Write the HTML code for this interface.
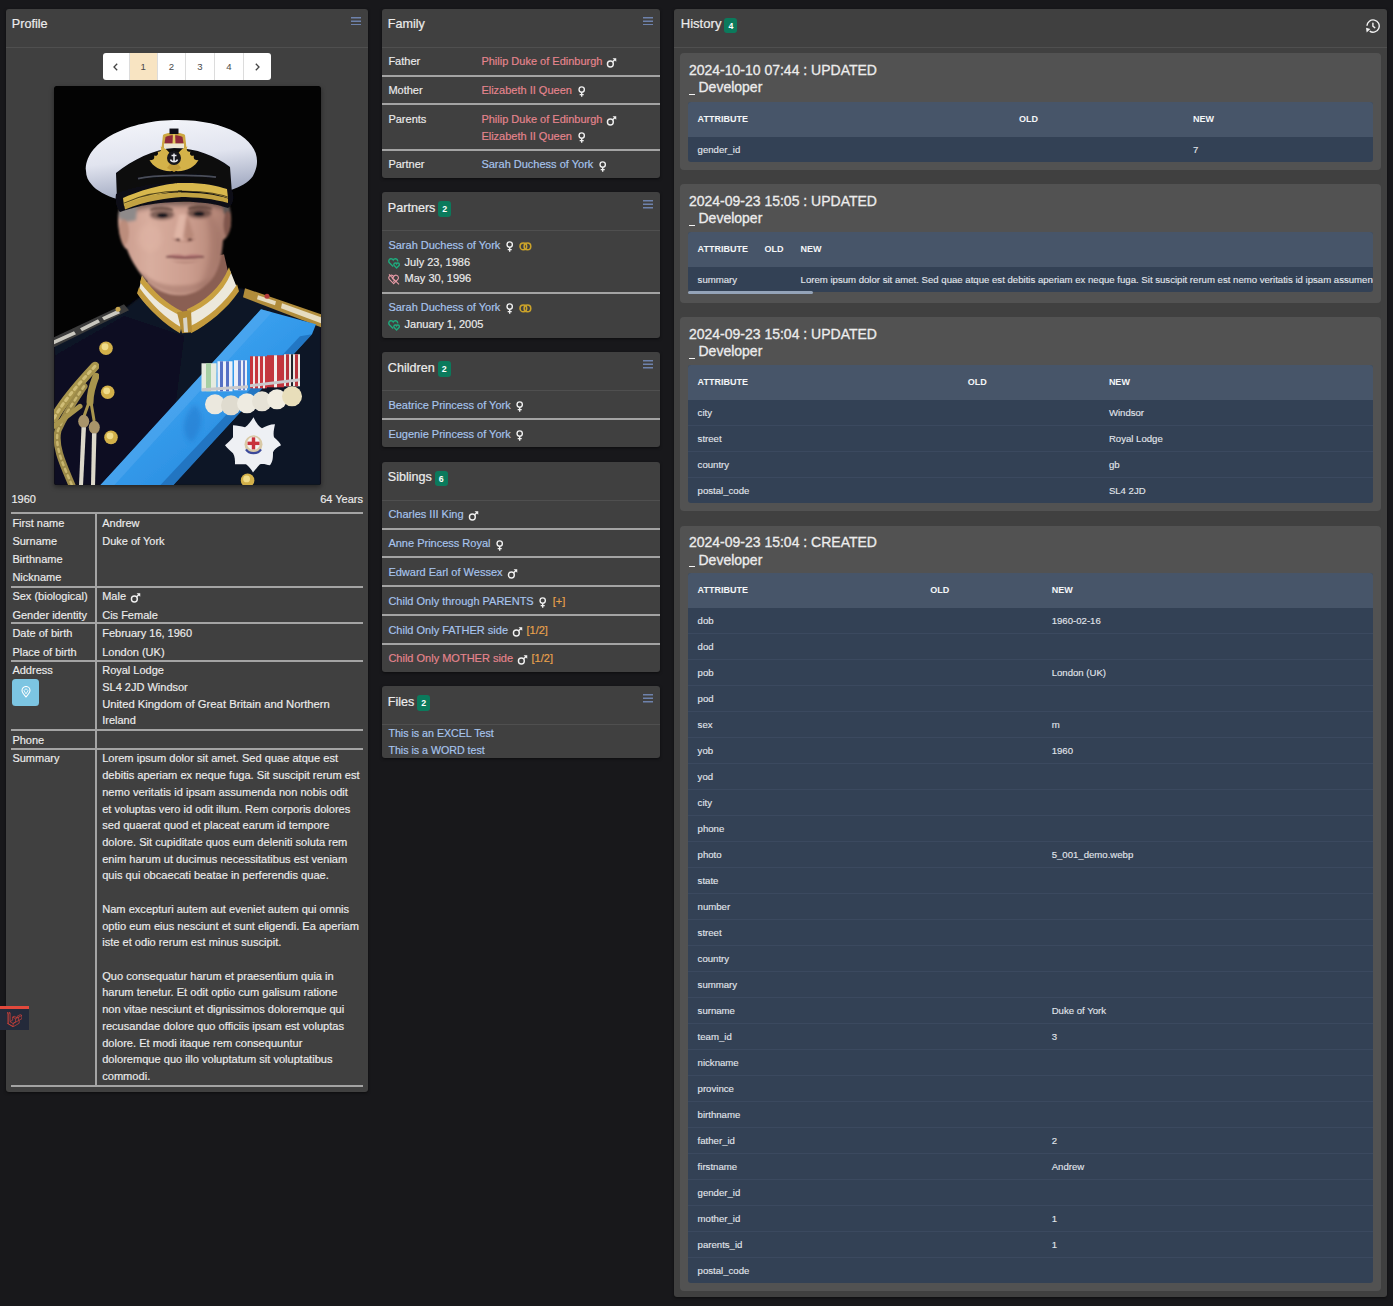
<!DOCTYPE html>
<html lang="en"><head><meta charset="utf-8"><title>Profile</title>
<style>
*{box-sizing:border-box}
html,body{margin:0;padding:0}
body{width:1393px;height:1306px;background:#18181b;font-family:"Liberation Sans",sans-serif;font-size:11px;line-height:16.7px;color:#ececec;position:relative;overflow:hidden;-webkit-text-stroke:0.16px currentColor}
.card{position:absolute;background:#404040;border-radius:3px;box-shadow:0 1px 3px rgba(0,0,0,.5)}
.ch{position:relative;height:38.8px;border-bottom:1px solid #4f4f4f}
.ch .t{position:absolute;left:5.8px;top:7.3px;font-size:12.6px;line-height:17px;-webkit-text-stroke:0.2px currentColor;white-space:nowrap}
.badge{display:inline-block;vertical-align:top;margin-left:3px;margin-top:1.2px;width:12.8px;height:15.8px;background:#0b7a5c;border-radius:3px;color:#fff;font-size:8.8px;font-weight:bold;line-height:16px;text-align:center;-webkit-text-stroke:0}
.burger{position:absolute;right:7.4px;top:7.9px;width:10px;height:8.6px}
.histi{position:absolute;right:6.5px;top:9.9px;width:14.6px;height:14.6px}
.row{position:relative;padding:5.5px 6.4px 4.6px 6.4px;border-bottom:2px solid #a4a4a4;white-space:nowrap}
.row:last-child{border-bottom:0}
.row .k{display:inline-block;width:93px;vertical-align:top}
.row .v{display:inline-block;vertical-align:top}
a,.l{color:#a8c5ee;text-decoration:none}
.rd{color:#e6858e}
.or{color:#e9a24c}
.gi{display:inline-block;vertical-align:-3.4px;margin-left:4px}
.gi.m{width:11.4px;height:11.4px}
.gi.f{width:7.4px;height:11px;margin-left:5.6px;margin-right:1px}
.gi.r{width:12.8px;height:8.8px;margin-left:5px;vertical-align:-1.9px}
.hi{display:inline-block;width:12px;height:12px;vertical-align:-3px;margin-right:4.2px}
.abs{position:absolute;white-space:nowrap}
.hl{position:absolute;left:5px;width:352px;height:2px;background:#a4a4a4}
.pg{position:absolute;left:97px;top:44.2px;width:168px;height:26.8px;background:#fff;border-radius:3px;overflow:hidden;display:flex;color:#4a4a4a;font-size:9.6px;-webkit-text-stroke:0}
.pg div{height:100%;border-right:1px solid #dcdcdc;text-align:center;line-height:27px}
.pg div:last-child{border-right:0}
.photo{position:absolute;left:48px;top:76.8px;width:267px;height:399.4px;display:block;border-radius:2px;box-shadow:0 2px 5px rgba(0,0,0,.45)}
.ic{position:absolute;left:6px;right:6px;background:#525252;border-radius:4px;padding:8px 8px 8px 8px}
.ic .h{font-size:14px;line-height:17.5px;margin-left:0.6px;position:relative;top:0.6px;white-space:nowrap;-webkit-text-stroke:0.3px currentColor;height:40.2px}
.tb{width:685px;border-radius:3px;overflow:hidden;-webkit-text-stroke:0.12px currentColor;background:#334155}
.tr{display:flex;height:26px;border-bottom:1px solid #3b495f;font-size:9.6px;line-height:25px;color:#e2e6ec;white-space:nowrap;overflow:hidden}
.tr:last-child{height:25px;border-bottom:0}
.tr.th{background:#475569;height:34.5px;border-bottom:0;font-size:9px;font-weight:bold;line-height:34.2px;color:#f4f6f8;-webkit-text-stroke:0}
.tr div{padding-left:9.3px;flex:none;padding-top:0.3px}
.tr.th div{padding-top:0}
.us{display:inline-block;width:5.8px;height:1.3px;background:#f3f3f3;margin-right:3.8px;vertical-align:-2.6px}
</style></head>
<body>
<div class="card" style="left:6px;top:9.0px;width:362px;height:1083px"><div class="ch"><div class="t">Profile</div><svg class="burger" viewBox="0 0 10 8.6"><path d="M0 0.8 H10 M0 4.3 H10 M0 7.8 H10" stroke="#6e82ac" stroke-width="1.5" fill="none"/></svg></div><div style="position:absolute;left:0;top:0;width:362px;height:100%"><div class="pg"><div style="width:26.6px"><svg width="5" height="8" viewBox="0 0 5 8" style="vertical-align:-0.5px"><path d="M4.2 0.8 L1 4 L4.2 7.2" fill="none" stroke="#444" stroke-width="1.3"/></svg></div><div style="width:28px;background:#f8e4c2">1</div><div style="width:28.5px">2</div><div style="width:28.6px">3</div><div style="width:29.7px">4</div><div style="width:26.6px"><svg width="5" height="8" viewBox="0 0 5 8" style="vertical-align:-0.5px"><path d="M0.8 0.8 L4 4 L0.8 7.2" fill="none" stroke="#444" stroke-width="1.3"/></svg></div></div><svg class="photo" viewBox="0 0 267 399" width="267" height="399" preserveAspectRatio="none">
<defs>
<filter id="b1" x="-20%" y="-20%" width="140%" height="140%"><feGaussianBlur stdDeviation="1.1"/></filter>
<filter id="b2" x="-20%" y="-20%" width="140%" height="140%"><feGaussianBlur stdDeviation="2.4"/></filter>
<filter id="b3" x="-30%" y="-30%" width="160%" height="160%"><feGaussianBlur stdDeviation="4"/></filter>
<filter id="b05" x="-5%" y="-5%" width="110%" height="110%"><feGaussianBlur stdDeviation="0.55"/></filter>
<linearGradient id="capg" x1="0" y1="0" x2="0.25" y2="1"><stop offset="0" stop-color="#f6f7fb"/><stop offset="0.55" stop-color="#e1e4ef"/><stop offset="1" stop-color="#a3abc2"/></linearGradient>
<linearGradient id="sash" x1="0" y1="0" x2="1" y2="1"><stop offset="0" stop-color="#2484da"/><stop offset="0.35" stop-color="#3ba2f0"/><stop offset="0.6" stop-color="#2f94e6"/><stop offset="1" stop-color="#2079cc"/></linearGradient>
<linearGradient id="skin" x1="0" y1="0" x2="1" y2="0"><stop offset="0" stop-color="#c99b8c"/><stop offset="0.28" stop-color="#d9ae9f"/><stop offset="0.62" stop-color="#cc9e8f"/><stop offset="0.85" stop-color="#b98a7b"/><stop offset="1" stop-color="#a07468"/></linearGradient>
<clipPath id="pc"><rect x="0" y="0" width="267" height="399" rx="2"/></clipPath>
<clipPath id="fc"><path d="M68 116 C64 124 63 134 65 145 C67 156 70 162 73 163 C76 172 82 182 90 192 C100 203 112 209 126 209 C140 209 152 201 160 190 C166 180 168 168 169 154 C174 152 178 142 177 130 C176 122 174 116 170 110 L120 100 Z"/></clipPath>
</defs>
<g clip-path="url(#pc)">
<rect width="267" height="399" fill="#030303"/>
<!-- uniform body -->
<g filter="url(#b1)">
<path d="M0 258 L30 243 L74 220 L92 206 L176 200 L194 204 L240 222 L267 234 L267 399 L0 399 Z" fill="#0d1326"/>
<path d="M70 230 L130 250 L120 330 L60 399 L0 399 L0 270 Z" fill="#0a0f1e" opacity=".7"/>
</g>
<!-- epaulettes -->
<g filter="url(#b05)">
<path d="M0 251 L70 218 L75 224 L0 261 Z" fill="#3a3a3a"/>
<path d="M0 254 L20 245 L22 248 L0 258 Z M26 242 L44 233 L46 236 L28 245 Z M48 231 L64 223.500 L66 227 L50 234 Z" fill="#c9c7be"/>
<circle cx="64" cy="223" r="2.500" fill="#c8a650"/>
<path d="M191 202 L267 228 L267 241 L189 211 Z" fill="#b08c3a"/>
<path d="M204 209 L222 215 L221 219 L203 213 Z M228 217 L267 231 L267 237 L227 222 Z" fill="#e6dcc0"/>
<circle cx="213" cy="210" r="2.500" fill="#b23a3a"/>
</g>
<!-- neck / collar -->
<g filter="url(#b05)">
<path d="M92 198 L112 226 L128 240 L160 215 L177 198 L170 168 L100 186 Z" fill="#8a5f53"/>
<path d="M84 208 C96 224 112 238 126 246 L128 228 C112 220 98 208 88 190 Z" fill="#ece8db"/>
<path d="M134 226 C152 218 168 206 176 184 L184 204 C172 222 154 238 137 246 Z" fill="#ece8db"/>
<path d="M83 207 C95 224 111 238 126 247 L127 241 C112 232 98 219 85 201 Z" fill="#c39a3c"/>
<path d="M86 196 C98 212 112 223 128 230 L128 225 C114 218 100 207 88 189 Z" fill="#c8a040"/>
<path d="M137 247 C154 238 173 223 185 205 L183 198 C171 217 153 232 136 240 Z" fill="#c39a3c"/>
<path d="M134 228 C152 220 168 208 177 187 L175 181 C167 201 151 215 133 223 Z" fill="#c8a040"/>
<path d="M123 226 L128 247 L138 246 L137 224 Z" fill="#b48c34"/>
<path d="M129 232 L133 231 L134 246 L130 246 Z" fill="#d8d4c8"/>
</g>
<!-- face -->
<g filter="url(#b1)">
<path d="M68 116 C64 124 63 134 65 145 C67 156 70 162 73 163 C76 172 82 182 90 192 C100 203 112 209 126 209 C140 209 152 201 160 190 C166 180 168 168 169 154 C174 152 178 142 177 130 C176 122 174 116 170 110 L120 100 Z" fill="url(#skin)"/>
<g clip-path="url(#fc)">
<path d="M60 100 L182 100 L180 124 C150 116 96 118 64 128 Z" fill="#2e2222" opacity=".55" filter="url(#b2)"/>
<path d="M64 112 L84 110 L82 134 L70 136 L64 130 Z" fill="#8e8a8a" filter="url(#b1)"/>
<path d="M166 108 L180 110 L178 126 L170 128 Z" fill="#5f5755"/>
<ellipse cx="70" cy="146" rx="5" ry="13" fill="#b88877" opacity=".8"/>
<ellipse cx="173.500" cy="138" rx="4" ry="13" fill="#7c5349" opacity=".9"/>
<ellipse cx="108" cy="128.500" rx="12" ry="5" fill="#5a3f3a" opacity=".7" filter="url(#b1)"/>
<ellipse cx="145.500" cy="127" rx="12" ry="5" fill="#543a36" opacity=".75" filter="url(#b1)"/>
<ellipse cx="108.500" cy="129.300" rx="5.500" ry="2.300" fill="#17131a"/>
<ellipse cx="145" cy="127.800" rx="5.500" ry="2.300" fill="#17131a"/>
<path d="M96 123 C102 120 112 120 119 123 L119 125 C112 122.500 102 122.500 96 125 Z" fill="#5c4038" opacity=".9"/>
<path d="M134 121.500 C142 118.500 152 119 158 122 L158 124 C152 121.500 142 121.500 134 124 Z" fill="#5c4038" opacity=".9"/>
<path d="M125 128 L120 151 L128 155 L133 128 Z" fill="#e2b8a9" opacity=".9" filter="url(#b1)"/>
<path d="M133 128 L140 150 L134 156 L130 150 Z" fill="#a87868" opacity=".55" filter="url(#b1)"/>
<path d="M118 152 C123 157 137 157 142 152 C138 154 134 155.500 130 155.500 C126 155.500 122 154 118 152 Z" fill="#8a574c"/>
<ellipse cx="124" cy="153.500" rx="2.300" ry="1.200" fill="#5a3530"/>
<ellipse cx="136" cy="153.500" rx="2.300" ry="1.200" fill="#5a3530"/>
<path d="M112 170 C120 167.500 126 168.500 131 169.500 C136 168.500 142 167.500 150 170 C142 174 120 174 112 170 Z" fill="#b57876"/>
<path d="M112 170.500 C124 171.800 138 171.800 150 170.500" fill="none" stroke="#6e3e40" stroke-width="1.500"/>
<path d="M116 174 C124 178 138 178 146 174 C140 176 122 176 116 174 Z" fill="#a5736a" opacity=".7"/>
<path d="M150 124 C166 132 172 150 166 180 C160 194 152 202 140 206 C158 186 160 150 150 124 Z" fill="#8f6459" opacity=".35" filter="url(#b2)"/>
<path d="M84 184 C92 198 108 207 126 208 C144 208 156 198 162 186 C152 201 108 205 92 189 Z" fill="#9a6e62" opacity=".45" filter="url(#b1)"/>
<ellipse cx="96" cy="152" rx="12" ry="14" fill="#e0b5a6" opacity=".55" filter="url(#b2)"/>
</g>
</g>
<!-- cap -->
<g filter="url(#b05)">
<path d="M32 85 C30 58 70 35 120 34 C170 33 204 52 203 76 C203 82 200 88 199 90 C194 97 186 101 177 104 L174 80 L64 86 L63 113 C52 110 42 104 38 99 C34 95 32 90 32 85 Z" fill="url(#capg)"/>
<path d="M62 87 C78 74 100 63 120 62 C142 62 162 70 176 81 L178 108 C150 98 92 100 63 114 Z" fill="#090a11"/>
<path d="M62 108 C92 94 150 92 178 104 C181 112 179 119 174 122 C148 112 96 114 66 126 C62 122 61 114 62 108 Z" fill="#0c0d14"/>
<path d="M84 92.500 C100 89 140 88 162 91" fill="none" stroke="#4a4d58" stroke-width="1.800"/>
<path d="M69 112 C96 100 120 97 127 97 L128 105 C112 106 92 110 70 120 Z" fill="#d8b84e"/>
<path d="M123 97 C146 96 162 99 173 103 L174 112 C160 107 144 105 124 105 Z" fill="#d8b84e"/>
<path d="M70 118.500 C92 108.500 112 106.500 127 106.500 L128 111 C112 112 92 115 71 123.500 Z" fill="#c2a242"/>
<path d="M124 106.500 C146 106.500 162 108.500 174 112.500 L174 117 C160 113 144 111 124 111 Z" fill="#c2a242"/>
<path d="M70 117 C92 107 112 105 128 105 M124 105 C146 105 162 107 174 111" fill="none" stroke="#1a1508" stroke-width="1" opacity=".7"/>
<!-- badge: laurel wings -->
<path d="M119 85 C108 86 99 81 95.500 74 C99 74.500 101 73 100 69.500 C103 70.500 105 68.500 103.500 65.500 C107 66.500 108 63.500 106.500 60.500 C112 62 117 67 119 74 Z" fill="#d4b248"/>
<path d="M121 85 C132 86 141 81 144.500 74 C141 74.500 139 73 140 69.500 C137 70.500 135 68.500 136.500 65.500 C133 66.500 132 63.500 133.500 60.500 C128 62 123 67 121 74 Z" fill="#d4b248"/>
<path d="M113 82 L120 86 L127 82 L124 78 L116 78 Z" fill="#c09a38"/>
<circle cx="120" cy="72" r="7" fill="#15151c"/>
<path d="M120 67.500 V76.500 M116.500 73.500 C117.500 76.500 122.500 76.500 123.500 73.500 M117.500 69.500 H122.500" fill="none" stroke="#e8e8ee" stroke-width="1.500"/>
<path d="M109 49 C112 46 128 46 131 49 L132.500 62 L107.500 62 Z" fill="#cda842"/>
<path d="M111.500 51 C115 48.500 125 48.500 128.500 51 L129.500 57.500 L110.500 57.500 Z" fill="#8e2a3a"/>
<path d="M119 46 L121 46 L121.500 58 L118.500 58 Z" fill="#e2c860"/>
<rect x="110" y="57.500" width="20" height="4.500" fill="#ece6d4"/>
<rect x="115.500" y="42.500" width="9" height="5.500" fill="#101016"/>
</g>
<!-- sash -->
<g filter="url(#b05)">
<path d="M207 223 L262 238 L258 248 L119 399 L46 399 L178 255 Z" fill="url(#sash)"/>
<path d="M207 223 L218 226 L60 399 L46 399 L178 255 Z" fill="#55aaf0" opacity=".5"/>
<path d="M246 250 L258 248 L119 399 L106 399 Z" fill="#175ca6" opacity=".55"/>
<path d="M140 318 C150 326 150 340 138 356 C128 350 126 334 140 318 Z" fill="#1c68bc" opacity=".35" filter="url(#b2)"/>
</g>
<!-- medals -->
<g filter="url(#b05)">
<rect x="147.500" y="277" width="15" height="28" fill="#e6ebe0"/>
<rect x="152" y="277" width="5" height="28" fill="#a6cfa4"/>
<rect x="163.500" y="275" width="15" height="30" fill="#eceff8"/>
<rect x="166" y="275" width="3" height="30" fill="#5570c4"/>
<rect x="172" y="275" width="3" height="30" fill="#5570c4"/>
<rect x="180" y="274" width="13" height="30" fill="#eceff8"/>
<rect x="184" y="274" width="3" height="30" fill="#6480cc"/>
<rect x="189" y="274" width="2" height="30" fill="#6480cc"/>
<rect x="196" y="270" width="17" height="32" fill="#c6363e"/>
<rect x="199" y="270" width="2" height="32" fill="#f2eaea"/>
<rect x="204" y="270" width="2" height="32" fill="#f2eaea"/>
<rect x="209" y="270" width="2" height="32" fill="#f2eaea"/>
<rect x="213" y="269" width="17" height="32" fill="#c2343c"/>
<rect x="220" y="269" width="3" height="32" fill="#f4eeee"/>
<rect x="230" y="268" width="16" height="32" fill="#ece8e4"/>
<rect x="232" y="268" width="3" height="32" fill="#b8323a"/>
<rect x="237" y="268" width="2" height="32" fill="#20222c"/>
<rect x="241" y="268" width="3" height="32" fill="#b8323a"/>
<path d="M148 302 L194 299 L194 302 L148 305 Z M196 298 L246 292 L246 295 L196 301 Z" fill="#c9c9cc"/>
<circle cx="161" cy="318" r="10" fill="#ebe8de"/>
<circle cx="177" cy="319" r="10" fill="#dfdbcf"/>
<circle cx="193" cy="317" r="10" fill="#eeebe1"/>
<circle cx="208" cy="315" r="10" fill="#e6e2d6"/>
<circle cx="223" cy="313" r="10" fill="#f0ece0"/>
<circle cx="238" cy="310" r="10" fill="#e8deba"/>
</g>
<!-- star -->
<g filter="url(#b05)">
<path d="M199.500 331 C203 338 205 340 208 342 C212 340 216 338 221 338 C220 343 219 347 220 351 C223 354 226 356 227 359 C223 361 220 363 219 366 C219 371 219 375 216 379 C212 378 209 377 206 378 C203 381 201 384 199 386 C197 383 195 380 192 378 C188 378 185 378 181 378 C181 374 181 370 179 367 C176 364 173 362 171 359 C174 356 177 354 179 351 C179 347 179 343 179 339 C183 339 187 340 191 341 C194 339 197 335 199.500 331 Z" fill="#eef0f4"/>
<circle cx="199.500" cy="358" r="9" fill="#d9c9a6"/>
<circle cx="199.500" cy="357" r="6.500" fill="#f2f2f2"/>
<rect x="197.800" y="351" width="3.400" height="12" fill="#c8303a"/>
<rect x="193.500" y="355.300" width="12" height="3.400" fill="#c8303a"/>
<path d="M192 363 C195 368 204 368 207 363" fill="none" stroke="#3a4a9a" stroke-width="2.200"/>
</g>
<!-- buttons -->
<g filter="url(#b05)">
<circle cx="52" cy="262" r="6.800" fill="#d2b04a"/>
<circle cx="53.700" cy="306" r="6.800" fill="#d2b04a"/>
<circle cx="57" cy="351" r="6.800" fill="#d2b04a"/>
<circle cx="193.600" cy="394" r="6.800" fill="#d2b04a"/>
<circle cx="51" cy="260.500" r="3.400" fill="#f0dc8a"/>
<circle cx="52.700" cy="304.500" r="3.400" fill="#f0dc8a"/>
<circle cx="56" cy="349.500" r="3.400" fill="#f0dc8a"/>
<circle cx="192.600" cy="392.500" r="3.400" fill="#f0dc8a"/>
</g>
<!-- aiguillette -->
<g filter="url(#b05)" fill="none" stroke-linecap="round">
<path d="M41 280 C26 296 10 314 0 332" stroke="#a8954e" stroke-width="9"/>
<path d="M41 280 C26 296 10 314 0 332" stroke="#d0be78" stroke-width="3" stroke-dasharray="3 4"/>
<path d="M42 290 C38 300 36 308 36 316" stroke="#a8954e" stroke-width="7"/>
<path d="M30 300 C22 312 12 326 4 344 C0 360 10 380 18 399" stroke="#9c8a48" stroke-width="7"/>
<path d="M30 300 C22 312 12 326 4 344 C0 360 10 380 18 399" stroke="#c8b670" stroke-width="2.500" stroke-dasharray="3 4"/>
<path d="M0 340 L26 320" stroke="#a8954e" stroke-width="5"/>
<path d="M35 316 L30 330 M37 316 L40 334" stroke="#a8954e" stroke-width="3"/>
</g>
<g filter="url(#b05)">
<ellipse cx="29.700" cy="335" rx="5.500" ry="6.500" fill="#a8946a"/>
<ellipse cx="40.300" cy="341" rx="5.500" ry="6.500" fill="#a8946a"/>
<path d="M27.500 341 L32 341 L29 399 L25 399 Z" fill="#dcd8ca"/>
<path d="M38 347 L42.500 347 L41 399 L37 399 Z" fill="#dcd8ca"/>
</g>
</g>
</svg>
<div class="abs" style="left:5.4px;top:481.7px">1960</div><div class="abs" style="right:5px;top:481.7px">64 Years</div><div class="hl" style="top:503.3px"></div><div class="hl" style="top:576.5px"></div><div class="hl" style="top:613.3px"></div><div class="hl" style="top:650.7px"></div><div class="hl" style="top:720.1px"></div><div class="hl" style="top:739.0px"></div><div class="hl" style="top:1076.0px"></div><div class="abs" style="left:89px;top:504.29999999999995px;width:2px;height:572.7px;background:#a4a4a4"></div><div class="abs" style="left:6.4px;top:505.8px">First name</div><div class="abs" style="left:6.4px;top:524.1px">Surname</div><div class="abs" style="left:6.4px;top:542.2px">Birthname</div><div class="abs" style="left:6.4px;top:560.3px">Nickname</div><div class="abs" style="left:6.4px;top:579.3px">Sex (biological)</div><div class="abs" style="left:6.4px;top:597.7px">Gender identity</div><div class="abs" style="left:6.4px;top:616.3px">Date of birth</div><div class="abs" style="left:6.4px;top:634.6px">Place of birth</div><div class="abs" style="left:6.4px;top:653.3px">Address</div><div class="abs" style="left:6.4px;top:722.9px">Phone</div><div class="abs" style="left:6.4px;top:741.4px">Summary</div><div class="abs" style="left:96.2px;top:505.8px">Andrew</div><div class="abs" style="left:96.2px;top:524.1px">Duke of York</div><div class="abs" style="left:96.2px;top:579.3px">Male<svg class="gi m" viewBox="0 0 12 12"><circle cx="4.6" cy="7.4" r="3.1" fill="none" stroke="#f0f0f0" stroke-width="1.5"/><path d="M7 5 L10 2" fill="none" stroke="#f0f0f0" stroke-width="1.5"/><path d="M6.9 1.2 H10.8 V5.1 Z" fill="#f0f0f0"/></svg></div><div class="abs" style="left:96.2px;top:597.7px">Cis Female</div><div class="abs" style="left:96.2px;top:616.3px">February 16, 1960</div><div class="abs" style="left:96.2px;top:634.6px">London (UK)</div><div class="abs" style="left:96.2px;top:653.3px">Royal Lodge</div><div class="abs" style="left:96.2px;top:670.0px">SL4 2JD Windsor</div><div class="abs" style="left:96.2px;top:686.6px"><span style="font-size:11.25px">United Kingdom of Great Britain and Northern</span></div><div class="abs" style="left:96.2px;top:703.1px">Ireland</div><div class="abs" style="left:6.2px;top:669.7px;width:27px;height:27px;background:#7cc5e2;border-radius:3.5px;display:flex;align-items:center;justify-content:center"><svg viewBox="0 0 12 14" width="10" height="12"><path d="M6 13 C3 9.6 1.2 7.6 1.2 5.2 A4.8 4.8 0 0 1 10.8 5.2 C10.8 7.6 9 9.6 6 13 Z" fill="none" stroke="#fff" stroke-width="1.3"/><path d="M6 9.2 L3.6 5.4 L6 3 L8.4 5.4 Z" fill="none" stroke="#fff" stroke-width="1"/></svg></div><div class="abs" style="left:96.2px;top:741.4px;line-height:16.72px;font-size:11.08px">Lorem ipsum dolor sit amet. Sed quae atque est<br>debitis aperiam ex neque fuga. Sit suscipit rerum est<br>nemo veritatis id ipsam assumenda non nobis odit<br>et voluptas vero id odit illum. Rem corporis dolores<br>sed quaerat quod et placeat earum id tempore<br>dolore. Sit cupiditate quos eum deleniti soluta rem<br>enim harum ut ducimus necessitatibus est veniam<br>quis qui obcaecati beatae in perferendis quae.<br><br>Nam excepturi autem aut eveniet autem qui omnis<br>optio eum eius nesciunt et sunt eligendi. Ea aperiam<br>iste et odio rerum est minus suscipit.<br><br>Quo consequatur harum et praesentium quia in<br>harum tenetur. Et odit optio cum galisum ratione<br>non vitae nesciunt et dignissimos doloremque qui<br>recusandae dolore quo officiis ipsam est voluptas<br>dolore. Et modi itaque rem consequuntur<br>doloremque quo illo voluptatum sit voluptatibus<br>commodi.</div></div></div>
<div class="card" style="left:382px;top:9px;width:278.1px;height:169px"><div class="ch"><div class="t">Family</div><svg class="burger" viewBox="0 0 10 8.6"><path d="M0 0.8 H10 M0 4.3 H10 M0 7.8 H10" stroke="#6e82ac" stroke-width="1.5" fill="none"/></svg></div><div class="row"><span class="k">Father</span><span class="v"><span class="rd">Philip Duke of Edinburgh</span><svg class="gi m" viewBox="0 0 12 12"><circle cx="4.6" cy="7.4" r="3.1" fill="none" stroke="#f0f0f0" stroke-width="1.5"/><path d="M7 5 L10 2" fill="none" stroke="#f0f0f0" stroke-width="1.5"/><path d="M6.9 1.2 H10.8 V5.1 Z" fill="#f0f0f0"/></svg></span></div><div class="row"><span class="k">Mother</span><span class="v"><span class="rd">Elizabeth II Queen</span><svg class="gi f" viewBox="0 0 8 12"><circle cx="4" cy="3.9" r="2.9" fill="none" stroke="#f0f0f0" stroke-width="1.5"/><path d="M4 6.8 V11.6 M1.8 9.4 H6.2" fill="none" stroke="#f0f0f0" stroke-width="1.5"/></svg></span></div><div class="row"><span class="k">Parents</span><span class="v"><span class="rd">Philip Duke of Edinburgh</span><svg class="gi m" viewBox="0 0 12 12"><circle cx="4.6" cy="7.4" r="3.1" fill="none" stroke="#f0f0f0" stroke-width="1.5"/><path d="M7 5 L10 2" fill="none" stroke="#f0f0f0" stroke-width="1.5"/><path d="M6.9 1.2 H10.8 V5.1 Z" fill="#f0f0f0"/></svg><br><span class="rd">Elizabeth II Queen</span><svg class="gi f" viewBox="0 0 8 12"><circle cx="4" cy="3.9" r="2.9" fill="none" stroke="#f0f0f0" stroke-width="1.5"/><path d="M4 6.8 V11.6 M1.8 9.4 H6.2" fill="none" stroke="#f0f0f0" stroke-width="1.5"/></svg></span></div><div class="row"><span class="k">Partner</span><span class="v"><span class="l">Sarah Duchess of York</span><svg class="gi f" viewBox="0 0 8 12"><circle cx="4" cy="3.9" r="2.9" fill="none" stroke="#f0f0f0" stroke-width="1.5"/><path d="M4 6.8 V11.6 M1.8 9.4 H6.2" fill="none" stroke="#f0f0f0" stroke-width="1.5"/></svg></span></div></div>
<div class="card" style="left:382px;top:192.2px;width:278.1px;height:145.4px"><div class="ch" style="height:39.2px"><div class="t" style="top:7.7px">Partners<span class="badge">2</span></div><svg class="burger" viewBox="0 0 10 8.6"><path d="M0 0.8 H10 M0 4.3 H10 M0 7.8 H10" stroke="#6e82ac" stroke-width="1.5" fill="none"/></svg></div><div class="row"><span class="l">Sarah Duchess of York</span><svg class="gi f" viewBox="0 0 8 12"><circle cx="4" cy="3.9" r="2.9" fill="none" stroke="#f0f0f0" stroke-width="1.5"/><path d="M4 6.8 V11.6 M1.8 9.4 H6.2" fill="none" stroke="#f0f0f0" stroke-width="1.5"/></svg><svg class="gi r" viewBox="0 0 13 9"><circle cx="4.4" cy="4.5" r="3.4" fill="none" stroke="#cba32a" stroke-width="1.6"/><circle cx="8.6" cy="4.5" r="3.4" fill="none" stroke="#cba32a" stroke-width="1.6"/></svg><br><svg class="hi" viewBox="0 0 12 12"><path d="M5.2 9.6 L1.6 6 C0.2 4.6 0.6 2.2 2.6 1.8 C3.8 1.6 4.8 2.2 5.2 3 C5.6 2.2 6.6 1.6 7.8 1.8 C9.2 2.1 9.8 3.4 9.6 4.4" fill="none" stroke="#1fa97c" stroke-width="1.4"/><path d="M8.6 11 L6.4 8.8 C5.4 7.8 5.8 6.2 7.2 6 C7.9 5.9 8.4 6.2 8.6 6.7 C8.8 6.2 9.4 5.9 10.1 6 C11.4 6.2 11.8 7.8 10.8 8.8 Z" fill="none" stroke="#1fa97c" stroke-width="1.4"/></svg>July 23, 1986<br><svg class="hi" viewBox="0 0 12 12"><path d="M5.6 10.6 L1.6 6.6 C0.2 5.2 0.6 2.6 2.8 2.2 C4 2 5 2.6 5.6 3.6 C6.2 2.6 7.2 2 8.4 2.2 C10.6 2.6 11 5.2 9.6 6.6 Z" fill="none" stroke="#e79aa6" stroke-width="1.1"/><path d="M1 1.4 L11 11.4 M5.6 3.6 L4.4 5.6 L6.4 7 L5.6 9" fill="none" stroke="#e79aa6" stroke-width="1.1"/></svg>May 30, 1996</div><div class="row"><span class="l">Sarah Duchess of York</span><svg class="gi f" viewBox="0 0 8 12"><circle cx="4" cy="3.9" r="2.9" fill="none" stroke="#f0f0f0" stroke-width="1.5"/><path d="M4 6.8 V11.6 M1.8 9.4 H6.2" fill="none" stroke="#f0f0f0" stroke-width="1.5"/></svg><svg class="gi r" viewBox="0 0 13 9"><circle cx="4.4" cy="4.5" r="3.4" fill="none" stroke="#cba32a" stroke-width="1.6"/><circle cx="8.6" cy="4.5" r="3.4" fill="none" stroke="#cba32a" stroke-width="1.6"/></svg><br><svg class="hi" viewBox="0 0 12 12"><path d="M5.2 9.6 L1.6 6 C0.2 4.6 0.6 2.2 2.6 1.8 C3.8 1.6 4.8 2.2 5.2 3 C5.6 2.2 6.6 1.6 7.8 1.8 C9.2 2.1 9.8 3.4 9.6 4.4" fill="none" stroke="#1fa97c" stroke-width="1.4"/><path d="M8.6 11 L6.4 8.8 C5.4 7.8 5.8 6.2 7.2 6 C7.9 5.9 8.4 6.2 8.6 6.7 C8.8 6.2 9.4 5.9 10.1 6 C11.4 6.2 11.8 7.8 10.8 8.8 Z" fill="none" stroke="#1fa97c" stroke-width="1.4"/></svg>January 1, 2005</div></div>
<div class="card" style="left:382px;top:352.3px;width:278.1px;height:94.7px"><div class="ch" style="height:39.2px"><div class="t" style="top:7.7px">Children<span class="badge">2</span></div><svg class="burger" viewBox="0 0 10 8.6"><path d="M0 0.8 H10 M0 4.3 H10 M0 7.8 H10" stroke="#6e82ac" stroke-width="1.5" fill="none"/></svg></div><div class="row"><span class="l">Beatrice Princess of York</span><svg class="gi f" viewBox="0 0 8 12"><circle cx="4" cy="3.9" r="2.9" fill="none" stroke="#f0f0f0" stroke-width="1.5"/><path d="M4 6.8 V11.6 M1.8 9.4 H6.2" fill="none" stroke="#f0f0f0" stroke-width="1.5"/></svg></div><div class="row"><span class="l">Eugenie Princess of York</span><svg class="gi f" viewBox="0 0 8 12"><circle cx="4" cy="3.9" r="2.9" fill="none" stroke="#f0f0f0" stroke-width="1.5"/><path d="M4 6.8 V11.6 M1.8 9.4 H6.2" fill="none" stroke="#f0f0f0" stroke-width="1.5"/></svg></div></div>
<div class="card" style="left:382px;top:461.7px;width:278.1px;height:210.2px"><div class="ch" style="height:39.2px"><div class="t" style="top:7.7px">Siblings<span class="badge">6</span></div></div><div class="row"><span class="l">Charles III King</span><svg class="gi m" viewBox="0 0 12 12"><circle cx="4.6" cy="7.4" r="3.1" fill="none" stroke="#f0f0f0" stroke-width="1.5"/><path d="M7 5 L10 2" fill="none" stroke="#f0f0f0" stroke-width="1.5"/><path d="M6.9 1.2 H10.8 V5.1 Z" fill="#f0f0f0"/></svg></div><div class="row"><span class="l">Anne Princess Royal</span><svg class="gi f" viewBox="0 0 8 12"><circle cx="4" cy="3.9" r="2.9" fill="none" stroke="#f0f0f0" stroke-width="1.5"/><path d="M4 6.8 V11.6 M1.8 9.4 H6.2" fill="none" stroke="#f0f0f0" stroke-width="1.5"/></svg></div><div class="row"><span class="l">Edward Earl of Wessex</span><svg class="gi m" viewBox="0 0 12 12"><circle cx="4.6" cy="7.4" r="3.1" fill="none" stroke="#f0f0f0" stroke-width="1.5"/><path d="M7 5 L10 2" fill="none" stroke="#f0f0f0" stroke-width="1.5"/><path d="M6.9 1.2 H10.8 V5.1 Z" fill="#f0f0f0"/></svg></div><div class="row"><span class="l">Child Only through PARENTS</span><svg class="gi f" viewBox="0 0 8 12"><circle cx="4" cy="3.9" r="2.9" fill="none" stroke="#f0f0f0" stroke-width="1.5"/><path d="M4 6.8 V11.6 M1.8 9.4 H6.2" fill="none" stroke="#f0f0f0" stroke-width="1.5"/></svg> <span class="or" style="margin-left:2px">[+]</span></div><div class="row"><span class="l">Child Only FATHER side</span><svg class="gi m" viewBox="0 0 12 12"><circle cx="4.6" cy="7.4" r="3.1" fill="none" stroke="#f0f0f0" stroke-width="1.5"/><path d="M7 5 L10 2" fill="none" stroke="#f0f0f0" stroke-width="1.5"/><path d="M6.9 1.2 H10.8 V5.1 Z" fill="#f0f0f0"/></svg> <span class="or">[1/2]</span></div><div class="row"><span class="rd">Child Only MOTHER side</span><svg class="gi m" viewBox="0 0 12 12"><circle cx="4.6" cy="7.4" r="3.1" fill="none" stroke="#f0f0f0" stroke-width="1.5"/><path d="M7 5 L10 2" fill="none" stroke="#f0f0f0" stroke-width="1.5"/><path d="M6.9 1.2 H10.8 V5.1 Z" fill="#f0f0f0"/></svg> <span class="or">[1/2]</span></div></div>
<div class="card" style="left:382px;top:686.3px;width:278.1px;height:71.7px"><div class="ch" style="height:39.2px"><div class="t" style="top:7.7px">Files<span class="badge">2</span></div><svg class="burger" viewBox="0 0 10 8.6"><path d="M0 0.8 H10 M0 4.3 H10 M0 7.8 H10" stroke="#6e82ac" stroke-width="1.5" fill="none"/></svg></div><div style="padding:0 6.4px 0;white-space:nowrap;font-size:10.65px;margin-top:-0.7px"><span class="l">This is an EXCEL Test</span><br><span class="l">This is a WORD test</span></div></div>
<div class="card" style="left:674.3px;top:8.8px;width:712.7px;height:1287.8px"><div class="ch" style="height:39.2px"><div class="t" style="top:7.7px"><span style="font-size:13.1px;position:relative;top:-1.4px;left:0.6px;margin-right:0.6px">History</span><span class="badge">4</span></div><svg class="histi" viewBox="0 0 15 15"><path d="M1 7 A6.3 6.3 0 1 1 3.8 12.5" fill="none" stroke="#f2f2f2" stroke-width="1.45"/><path d="M0 9 L4.5 10.2 L0.7 13.9 Z" fill="#f2f2f2"/><path d="M7.1 4.2 V7.5 L9 8.9" fill="none" stroke="#f2f2f2" stroke-width="1.45" stroke-linecap="round" stroke-linejoin="round"/></svg></div><div style="position:absolute;left:0;top:0;right:0;bottom:0"><div class="ic" style="top:44.6px;height:116.3px"><div class="h" style="height:40.9px">2024-10-10 07:44 : UPDATED<br><span class="us"></span>Developer</div><div class="tb"><div class="tr th"><div style="width:321.4px">ATTRIBUTE</div><div style="width:174px">OLD</div><div>NEW</div></div><div class="tr"><div style="width:321.4px">gender_id</div><div style="width:174px"></div><div>7</div></div></div></div><div class="ic" style="top:175.5px;height:118.3px"><div class="h" style="height:39.9px">2024-09-23 15:05 : UPDATED<br><span class="us"></span>Developer</div><div class="tb"><div class="tr th"><div style="width:66.8px">ATTRIBUTE</div><div style="width:36.2px">OLD</div><div>NEW</div></div><div class="tr"><div style="width:66.8px">summary</div><div style="width:36.2px"></div><div>Lorem ipsum dolor sit amet. Sed quae atque est debitis aperiam ex neque fuga. Sit suscipit rerum est nemo veritatis id ipsam assumenda non nobis odit et voluptas vero</div></div></div><div style="position:absolute;left:8px;top:107.2px;width:125px;height:3px;background:#94a3b8;border-radius:2px"></div></div><div class="ic" style="top:308.4px;height:193.8px"><div class="h" style="height:40.3px">2024-09-23 15:04 : UPDATED<br><span class="us"></span>Developer</div><div class="tb"><div class="tr th"><div style="width:270.2px">ATTRIBUTE</div><div style="width:141.1px">OLD</div><div>NEW</div></div><div class="tr"><div style="width:270.2px">city</div><div style="width:141.1px"></div><div>Windsor</div></div><div class="tr"><div style="width:270.2px">street</div><div style="width:141.1px"></div><div>Royal Lodge</div></div><div class="tr"><div style="width:270.2px">country</div><div style="width:141.1px"></div><div>gb</div></div><div class="tr"><div style="width:270.2px">postal_code</div><div style="width:141.1px"></div><div>SL4 2JD</div></div></div></div><div class="ic" style="top:517.0px;height:765.4px"><div class="h" style="height:39.4px">2024-09-23 15:04 : CREATED<br><span class="us"></span>Developer</div><div class="tb"><div class="tr th"><div style="width:232.7px">ATTRIBUTE</div><div style="width:121.4px">OLD</div><div>NEW</div></div><div class="tr"><div style="width:232.7px">dob</div><div style="width:121.4px"></div><div>1960-02-16</div></div><div class="tr"><div style="width:232.7px">dod</div><div style="width:121.4px"></div><div></div></div><div class="tr"><div style="width:232.7px">pob</div><div style="width:121.4px"></div><div>London (UK)</div></div><div class="tr"><div style="width:232.7px">pod</div><div style="width:121.4px"></div><div></div></div><div class="tr"><div style="width:232.7px">sex</div><div style="width:121.4px"></div><div>m</div></div><div class="tr"><div style="width:232.7px">yob</div><div style="width:121.4px"></div><div>1960</div></div><div class="tr"><div style="width:232.7px">yod</div><div style="width:121.4px"></div><div></div></div><div class="tr"><div style="width:232.7px">city</div><div style="width:121.4px"></div><div></div></div><div class="tr"><div style="width:232.7px">phone</div><div style="width:121.4px"></div><div></div></div><div class="tr"><div style="width:232.7px">photo</div><div style="width:121.4px"></div><div>5_001_demo.webp</div></div><div class="tr"><div style="width:232.7px">state</div><div style="width:121.4px"></div><div></div></div><div class="tr"><div style="width:232.7px">number</div><div style="width:121.4px"></div><div></div></div><div class="tr"><div style="width:232.7px">street</div><div style="width:121.4px"></div><div></div></div><div class="tr"><div style="width:232.7px">country</div><div style="width:121.4px"></div><div></div></div><div class="tr"><div style="width:232.7px">summary</div><div style="width:121.4px"></div><div></div></div><div class="tr"><div style="width:232.7px">surname</div><div style="width:121.4px"></div><div>Duke of York</div></div><div class="tr"><div style="width:232.7px">team_id</div><div style="width:121.4px"></div><div>3</div></div><div class="tr"><div style="width:232.7px">nickname</div><div style="width:121.4px"></div><div></div></div><div class="tr"><div style="width:232.7px">province</div><div style="width:121.4px"></div><div></div></div><div class="tr"><div style="width:232.7px">birthname</div><div style="width:121.4px"></div><div></div></div><div class="tr"><div style="width:232.7px">father_id</div><div style="width:121.4px"></div><div>2</div></div><div class="tr"><div style="width:232.7px">firstname</div><div style="width:121.4px"></div><div>Andrew</div></div><div class="tr"><div style="width:232.7px">gender_id</div><div style="width:121.4px"></div><div></div></div><div class="tr"><div style="width:232.7px">mother_id</div><div style="width:121.4px"></div><div>1</div></div><div class="tr"><div style="width:232.7px">parents_id</div><div style="width:121.4px"></div><div>1</div></div><div class="tr"><div style="width:232.7px">postal_code</div><div style="width:121.4px"></div><div></div></div></div></div></div></div>
<div style="position:absolute;left:0;top:1006px;width:28.8px;height:23.6px;background:#242a3a;border-top:3.6px solid #e2493c;display:flex;align-items:center;justify-content:center"><svg viewBox="0 0 50 52" width="15" height="15.6"><path d="M49.6 11.6 V22.2 L40.6 27.4 V37.6 L20.4 49.2 L0.4 37.6 V2.8 L5.4 0 L10.4 2.8 V32 L18.8 27.2 V16.8 L23.8 14 L33.8 19.8 V14.4 L38.8 11.6 L44.6 8.8 Z M10.4 2.8 L5.4 5.8 L0.4 2.8 M5.4 5.8 V40 L20.4 48.6 M20.4 48.6 V38.6 L40.6 27.4 M20.4 38.6 L10.4 32.6 M28.8 22.6 L18.8 16.8 M28.8 22.6 V33 L20.4 38 M28.8 22.6 L38.8 16.8 M38.8 16.8 L49.6 11.6 M38.8 16.8 V27" fill="none" stroke="#e0443a" stroke-width="2.2" stroke-linejoin="round"/></svg></div>
</body></html>
